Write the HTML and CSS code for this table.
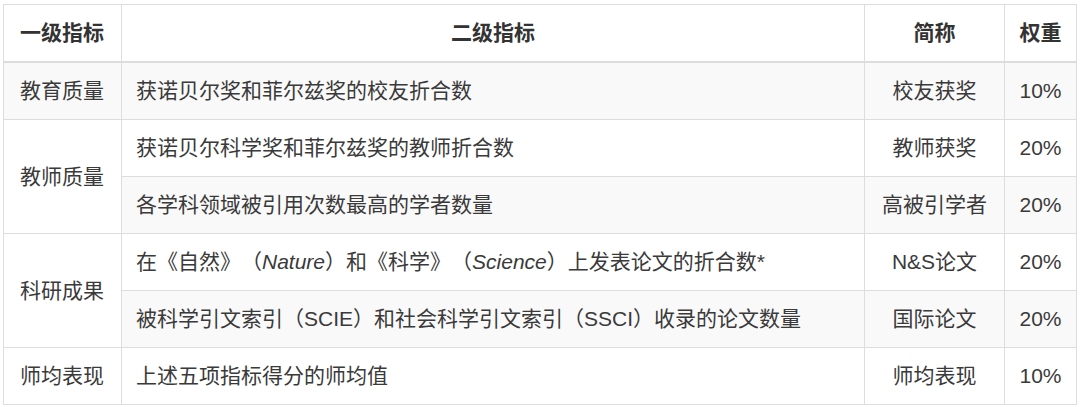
FILE: index.html
```html
<!DOCTYPE html>
<html lang="zh-CN">
<head>
<meta charset="utf-8">
<link rel="stylesheet" href="styles.css">
</head>
<body>
<table class="rank">
  <colgroup>
    <col class="c1"><col class="c2"><col class="c3"><col class="c4">
  </colgroup>
  <thead>
    <tr>
      <th class="left">一级指标</th>
      <th>二级指标</th>
      <th>简称</th>
      <th>权重</th>
    </tr>
  </thead>
  <tbody>
    <tr class="odd">
      <td class="left">教育质量</td>
      <td class="left sub">获诺贝尔奖和菲尔兹奖的校友折合数</td>
      <td>校友获奖</td>
      <td>10%</td>
    </tr>
    <tr>
      <td class="left" rowspan="2">教师质量</td>
      <td class="left sub">获诺贝尔科学奖和菲尔兹奖的教师折合数</td>
      <td>教师获奖</td>
      <td>20%</td>
    </tr>
    <tr class="odd">
      <td class="left sub">各学科领域被引用次数最高的学者数量</td>
      <td>高被引学者</td>
      <td>20%</td>
    </tr>
    <tr>
      <td class="left" rowspan="2">科研成果</td>
      <td class="left sub">在《自然》（<i>Nature</i>）和《科学》（<i>Science</i>）上发表论文的折合数*</td>
      <td>N&amp;S论文</td>
      <td>20%</td>
    </tr>
    <tr class="odd">
      <td class="left sub">被科学引文索引（SCIE）和社会科学引文索引（SSCI）收录的论文数量</td>
      <td>国际论文</td>
      <td>20%</td>
    </tr>
    <tr>
      <td class="left">师均表现</td>
      <td class="left sub">上述五项指标得分的师均值</td>
      <td>师均表现</td>
      <td>10%</td>
    </tr>
  </tbody>
</table>
</body>
</html>
```

FILE: styles.css
```css
html, body {
  margin: 0;
  padding: 0;
  background: #ffffff;
}

body {
  font-family: "Liberation Sans", "Noto Sans CJK SC", sans-serif;
  color: #3a3a3a;
  font-size: 21px;
  text-spacing-trim: space-all;
}

.rank {
  border-collapse: collapse;
  table-layout: fixed;
  width: 1073px;
  margin: 4px 0 0 3px;
  border: 1px solid #dddddd;
}

.c1 { width: 118px; }
.c2 { width: 743px; }
.c3 { width: 140px; }
.c4 { width: 72px; }

.rank th,
.rank td {
  border: 1px solid #dddddd;
  padding: 13px 10px 13px;
  line-height: 30px;
  height: 30px;
  text-align: center;
  vertical-align: middle;
  white-space: nowrap;
  overflow: hidden;
}

.rank th {
  font-weight: bold;
  color: #333333;
  border-bottom: 2px solid #dddddd;
  padding-top: 13px;
}

.rank .left {
  text-align: left;
  padding-left: 16px;
}

.rank .sub {
  padding-left: 14px;
}

.rank tr.odd td {
  background: #f9f9f9;
}

.rank i {
  font-style: italic;
}
```
